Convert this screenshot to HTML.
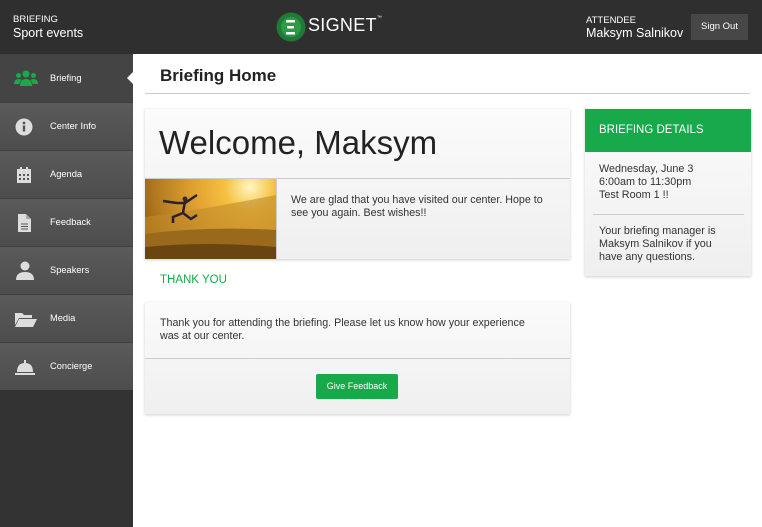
<!DOCTYPE html>
<html><head><meta charset="utf-8"><style>
*{margin:0;padding:0;box-sizing:border-box}
body{width:762px;height:527px;overflow:hidden;font-family:"Liberation Sans",Arial,sans-serif;background:#fff;position:relative}
.hdr{position:absolute;left:0;top:0;width:762px;height:54px;background:#2f2f2f;color:#fff}
.side{position:absolute;left:0;top:54px;width:133px;height:473px;background:#333}
.item{height:48px;background:linear-gradient(#5a5a5a,#4d4d4d);border-top:1px solid #404040;position:relative;color:#fff;font-size:9.3px}
.item.sel{background:#444}
.item span{position:absolute;left:50px;top:18px}
.item svg{position:absolute;left:14px;top:14px}
.abs{position:absolute}
.card{position:absolute;background:linear-gradient(#fbfbfb,#efefef);box-shadow:0 1px 3px rgba(0,0,0,.2)}
</style></head><body>
<div class="hdr">
 <div class="abs" style="left:13px;top:14px;font-size:9.5px">BRIEFING</div>
 <div class="abs" style="left:13px;top:26px;font-size:12.5px">Sport events</div>
 <svg class="abs" style="left:275px;top:11px" width="32" height="32" viewBox="0 0 32 32"><circle cx="16" cy="16" r="14.5" fill="#1e7a35"/><circle cx="16" cy="16" r="10" fill="#2d9a47"/><rect x="11" y="9" width="9" height="2.5" fill="#fff"/><rect x="12" y="15" width="7" height="2.5" fill="#fff"/><rect x="11" y="21" width="9" height="2.5" fill="#fff"/></svg>
 <div class="abs" style="left:308px;top:15px;font-size:18px;letter-spacing:0.3px">SIGNET<span style="font-size:5px;vertical-align:top">™</span></div>
 <div class="abs" style="left:586px;top:15px;font-size:9.5px">ATTENDEE</div>
 <div class="abs" style="left:586px;top:26px;font-size:12.5px">Maksym Salnikov</div>
 <div class="abs" style="left:691px;top:14px;width:57px;height:26px;background:#474747;font-size:9.5px;text-align:center;line-height:26px">Sign Out</div>
</div>
<div class="side">
 <div class="item sel"><svg width="24" height="20" viewBox="0 0 24 20"><circle cx="12" cy="5" r="3.5" fill="#1aa94a"/><circle cx="4.5" cy="6.5" r="2.5" fill="#1aa94a"/><circle cx="19.5" cy="6.5" r="2.5" fill="#1aa94a"/><path d="M6 17q0-7 6-7t6 7z M0 15q0-5 4.5-5 2 0 3 1-2 2-2 4z M24 15q0-5-4.5-5-2 0-3 1 2 2 2 4z" fill="#1aa94a"/></svg><span>Briefing</span></div>
 <div class="item"><svg width="20" height="20" viewBox="0 0 20 20"><circle cx="10" cy="10" r="8.5" fill="#ddd"/><rect x="8.8" y="8.5" width="2.4" height="6" fill="#555"/><circle cx="10" cy="6" r="1.4" fill="#555"/></svg><span>Center Info</span></div>
 <div class="item"><svg width="20" height="20" viewBox="0 0 20 20"><path d="M3 4h14v14H3z" fill="#ddd"/><rect x="6" y="2" width="2" height="3" fill="#ddd"/><rect x="12" y="2" width="2" height="3" fill="#ddd"/><path d="M5 9h2v2H5zM9 9h2v2H9zM13 9h2v2h-2zM5 13h2v2H5zM9 13h2v2H9zM13 13h2v2h-2z" fill="#555"/></svg><span>Agenda</span></div>
 <div class="item"><svg width="20" height="20" viewBox="0 0 20 20"><path d="M4 1h8l5 5v13H4z" fill="#ddd"/><path d="M12 1v5h5" fill="#aaa"/><path d="M7 11h7M7 13.5h7M7 16h7" stroke="#555" stroke-width="1"/></svg><span>Feedback</span></div>
 <div class="item"><svg width="22" height="20" viewBox="0 0 22 20"><circle cx="11" cy="5" r="4.5" fill="#ddd"/><path d="M2 19q0-8 9-8t9 8z" fill="#ddd"/></svg><span>Speakers</span></div>
 <div class="item"><svg width="24" height="20" viewBox="0 0 24 20"><path d="M1 4h7l2 2h8v3H5L1 16z" fill="#ddd"/><path d="M5 10h18l-4 8H1z" fill="#ddd"/></svg><span>Media</span></div>
 <div class="item"><svg width="22" height="20" viewBox="0 0 22 20"><rect x="10" y="3" width="2" height="3" fill="#ddd"/><path d="M3 15q0-9 8-9t8 9z" fill="#ddd"/><rect x="1" y="16" width="20" height="2" fill="#ddd"/></svg><span>Concierge</span></div>
</div>
<div class="abs" style="left:160px;top:66px;font-size:17px;font-weight:bold;color:#222">Briefing Home</div>
<div class="abs" style="left:145px;top:93px;width:605px;height:1px;background:#ccc"></div>
<div class="card" style="left:145px;top:109px;width:425px;height:150px">
 <div class="abs" style="left:14px;top:15px;font-size:33px;color:#222">Welcome, Maksym</div>
 <div class="abs" style="left:0;top:69px;width:425px;height:1px;background:#ccc"></div>
 <div class="abs" style="left:0;top:70px;width:131px;height:80px;background:radial-gradient(circle at 80% 10%,#fff6c0 0,#f5c040 20%,#e0a030 45%,#b07820 75%,#805010 100%)">
  <svg width="131" height="80"><path d="M0 38q50-6 131-22v64H0z" fill="#c08a2a" opacity=".6"/><path d="M0 55q60-8 131-4v29H0z" fill="#9a6a1c"/><path d="M0 68q60-6 131 0v12H0z" fill="#6a4512"/><circle cx="40" cy="20" r="2.5" fill="#3a2a2a"/><path d="M18 22l14 2 8 0 12-8M40 22l-2 12-10 4 0 6M38 34l8 6 6-4" stroke="#2a2030" stroke-width="2.5" fill="none"/></svg>
 </div>
 <div class="abs" style="left:131px;top:70px;width:1px;height:80px;background:#ccc"></div>
 <div class="abs" style="left:146px;top:85px;width:265px;font-size:10.7px;line-height:13px;color:#333">We are glad that you have visited our center. Hope to see you again. Best wishes!!</div>
</div>
<div class="abs" style="left:160px;top:274px;font-size:11.5px;color:#17a94a">THANK YOU</div>
<div class="card" style="left:145px;top:302px;width:425px;height:112px">
 <div class="abs" style="left:15px;top:15px;width:385px;font-size:10.7px;line-height:13px;color:#333">Thank you for attending the briefing. Please let us know how your experience was at our center.</div>
 <div class="abs" style="left:0;top:56px;width:425px;height:1px;background:#ccc"></div>
 <div class="abs" style="left:171px;top:72px;width:82px;height:25px;background:#17a94a;border-radius:2px;color:#fff;font-size:9px;text-align:center;line-height:25px">Give Feedback</div>
</div>
<div class="card" style="left:585px;top:109px;width:166px;height:167px">
 <div class="abs" style="left:0;top:0;width:166px;height:43px;background:#17a94a;color:#fff;font-size:11.5px;padding:15px 0 0 14px">BRIEFING DETAILS</div>
 <div class="abs" style="left:14px;top:54px;font-size:10.8px;line-height:13px;color:#333">Wednesday, June 3<br>6:00am to 11:30pm<br>Test Room 1 !!</div>
 <div class="abs" style="left:8px;top:105px;width:151px;height:1px;background:#ccc"></div>
 <div class="abs" style="left:14px;top:116px;font-size:10.8px;line-height:13px;color:#333">Your briefing manager is<br>Maksym Salnikov if you<br>have any questions.</div>
</div>
<div class="abs" style="left:127px;top:72px;width:0;height:0;border-top:6px solid transparent;border-bottom:6px solid transparent;border-right:6px solid #fff"></div>
</body></html>
